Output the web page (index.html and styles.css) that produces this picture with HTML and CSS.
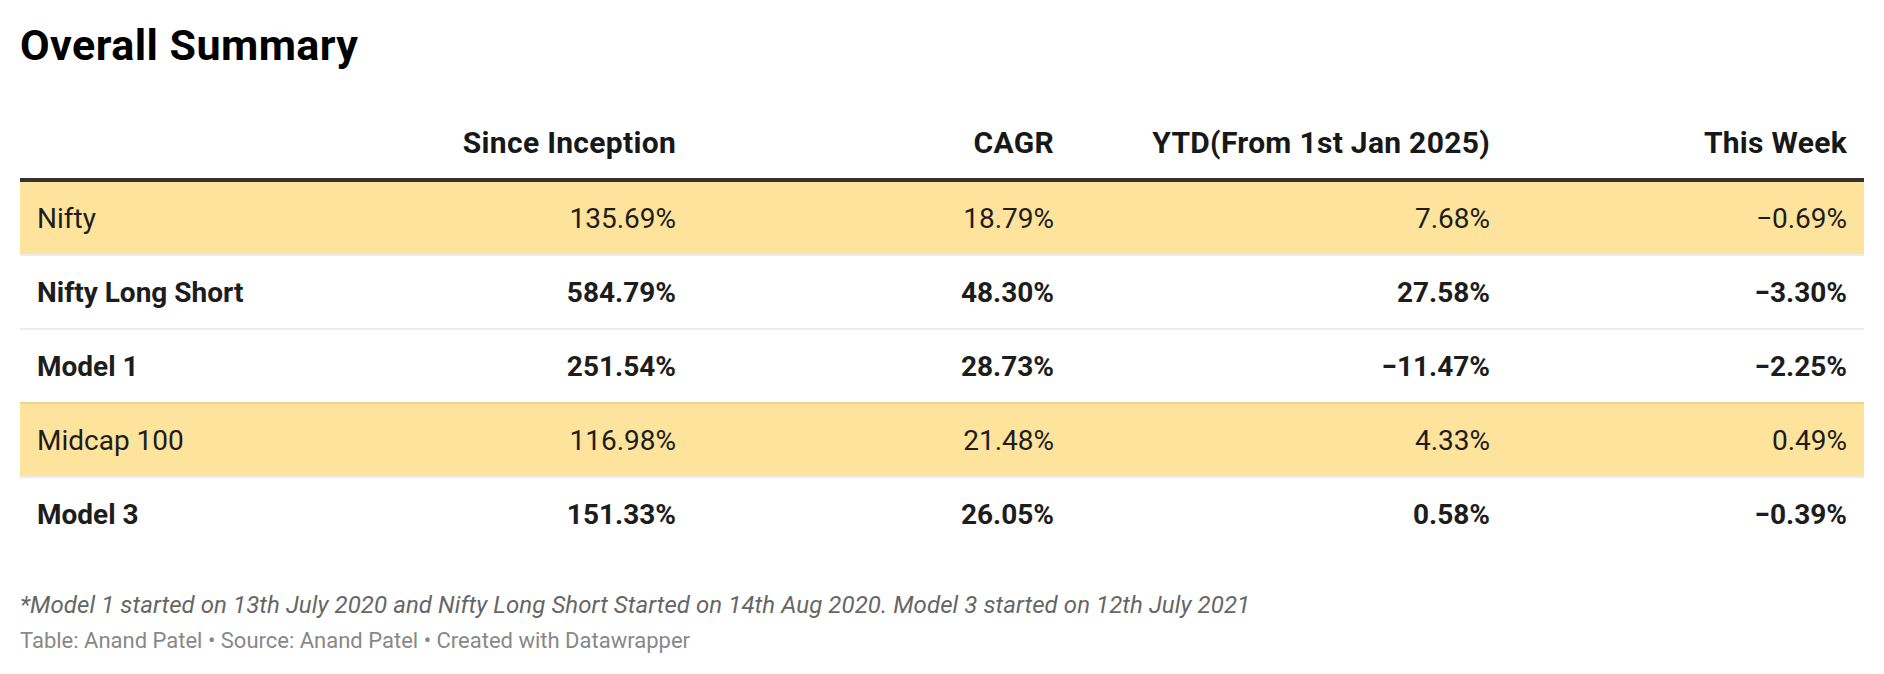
FILE: index.html
```html
<!DOCTYPE html>
<html lang="en">
<head>
<meta charset="utf-8">
<title>Overall Summary</title>
<link rel="stylesheet" href="styles.css">
</head>
<body>
<div class="chart">
  <h1 class="title">Overall Summary</h1>
  <table class="summary">
    <colgroup>
      <col class="c-label">
      <col class="c-since">
      <col class="c-cagr">
      <col class="c-ytd">
      <col class="c-week">
    </colgroup>
    <thead>
      <tr>
        <th class="label"></th>
        <th class="num">Since Inception</th>
        <th class="num">CAGR</th>
        <th class="num">YTD(From 1st Jan 2025)</th>
        <th class="num">This Week</th>
      </tr>
    </thead>
    <tbody>
      <tr class="hl first">
        <td class="label">Nifty</td>
        <td class="num">135.69%</td>
        <td class="num">18.79%</td>
        <td class="num">7.68%</td>
        <td class="num">−0.69%</td>
      </tr>
      <tr class="strong">
        <td class="label">Nifty Long Short</td>
        <td class="num">584.79%</td>
        <td class="num">48.30%</td>
        <td class="num">27.58%</td>
        <td class="num">−3.30%</td>
      </tr>
      <tr class="strong">
        <td class="label">Model 1</td>
        <td class="num">251.54%</td>
        <td class="num">28.73%</td>
        <td class="num">−11.47%</td>
        <td class="num">−2.25%</td>
      </tr>
      <tr class="hl">
        <td class="label">Midcap 100</td>
        <td class="num">116.98%</td>
        <td class="num">21.48%</td>
        <td class="num">4.33%</td>
        <td class="num">0.49%</td>
      </tr>
      <tr class="strong">
        <td class="label">Model 3</td>
        <td class="num">151.33%</td>
        <td class="num">26.05%</td>
        <td class="num">0.58%</td>
        <td class="num">−0.39%</td>
      </tr>
    </tbody>
  </table>
  <p class="note">*Model 1 started on 13th July 2020 and Nifty Long Short Started on 14th Aug 2020. Model 3 started on 12th July 2021</p>
  <p class="footer">Table: Anand Patel • Source: Anand Patel • Created with Datawrapper</p>
</div>
</body>
</html>
```
FILE: styles.css
```css
html, body {
  margin: 0;
  padding: 0;
  background: #ffffff;
}

.chart {
  padding: 20px 20px 0 20px;
  font-family: Roboto, "Liberation Sans", Arial, sans-serif;
  color: #1d1d1d;
}

.title {
  margin: 0;
  font-size: 43px;
  line-height: 50px;
  font-weight: 700;
  letter-spacing: 0.45px;
  color: #000;
}

.summary {
  margin-top: 55px;
  width: 1844px;
  table-layout: fixed;
  border-collapse: separate;
  border-spacing: 0;
}

.c-label { width: 380px; }
.c-since { width: 293px; }
.c-cagr { width: 378px; }
.c-ytd { width: 436px; }
.c-week { width: 357px; }

.summary th {
  font-size: 30px;
  line-height: 36px;
  font-weight: 700;
  letter-spacing: 0.3px;
  color: #181818;
  padding: 0 17px 17px 17px;
  border-bottom: 4px solid #333;
  white-space: nowrap;
}

.summary td {
  font-size: 28px;
  line-height: 36px;
  padding: 19px 17px 17px 17px;
  border-top: 2px solid rgba(0, 0, 0, 0.07);
  white-space: nowrap;
  color: #1d1d1d;
}

.summary tr.first td {
  border-top: none;
}

.summary .label {
  text-align: left;
}

.summary .num {
  text-align: right;
}

.summary tr.hl td {
  background: #fee39c;
  font-weight: 400;
}

.summary tr.strong td {
  font-weight: 700;
}

.note {
  margin: 40px 0 0 0;
  font-size: 24px;
  line-height: 30px;
  font-style: italic;
  letter-spacing: 0.08px;
  color: #666;
}

.footer {
  margin: 7px 0 0 0;
  font-size: 22px;
  line-height: 28px;
  color: #888;
}
```
